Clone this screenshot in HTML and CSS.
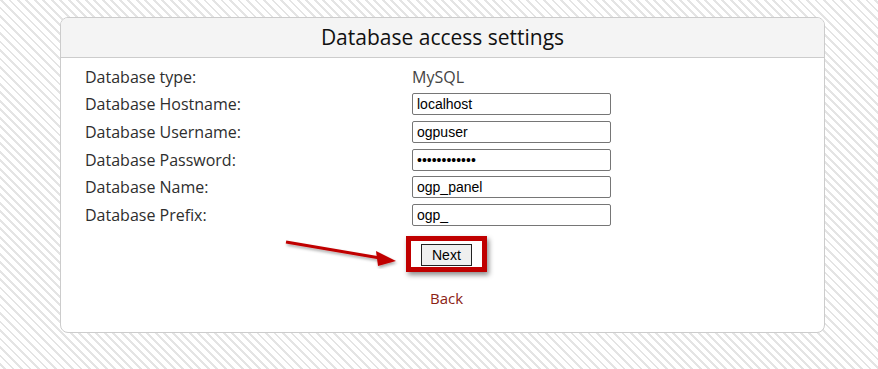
FILE: index.html
```html
<!DOCTYPE html>
<html lang="en">
<head>
  <meta charset="UTF-8">
  <title>Database access settings</title>
  <link rel="stylesheet" href="styles.css">
</head>
<body>

  <div class="panel">
    <div class="panel-head">Database access settings</div>

    <form class="panel-body">
      <div class="row">
        <label>Database type:</label>
        <span class="value">MySQL</span>
      </div>
      <div class="row">
        <label>Database Hostname:</label>
        <input type="text" value="localhost">
      </div>
      <div class="row">
        <label>Database Username:</label>
        <input type="text" value="ogpuser">
      </div>
      <div class="row">
        <label>Database Password:</label>
        <input type="password" value="ogppassword1">
      </div>
      <div class="row">
        <label>Database Name:</label>
        <input type="text" value="ogp_panel">
      </div>
      <div class="row">
        <label>Database Prefix:</label>
        <input type="text" value="ogp_">
      </div>

      <div class="actions">
        <div class="highlight">
          <button type="button">Next</button>
        </div>
        <!-- annotation arrow -->
        <svg class="arrow" width="120" height="30" viewBox="0 0 120 30">
          <defs>
            <filter id="sh" x="-20%" y="-50%" width="140%" height="200%">
              <feDropShadow dx="1" dy="2" stdDeviation="1.5" flood-color="#000" flood-opacity="0.35"/>
            </filter>
          </defs>
          <g filter="url(#sh)">
            <line x1="2" y1="3" x2="96" y2="19" stroke="#c00000" stroke-width="3"/>
            <polygon points="112,22 92,12 94,27" fill="#c00000"/>
          </g>
        </svg>
      </div>

      <a class="back" href="#">Back</a>
    </form>
  </div>

</body>
</html>
```

FILE: styles.css
```css
body {
  margin: 0;
  padding: 17px 0 38px;
  font-family: "Open Sans", sans-serif;
  color: #333;
  background-color: #fff;
  background-image: repeating-linear-gradient(45deg, #fff 0, #fff 4px, #e4e4e4 4px, #e4e4e4 6px);
}

.panel {
  width: 763px;
  margin: 0 auto 0 60px;
  background: #fff;
  border: 1px solid #cccccc;
  border-radius: 8px;
  overflow: hidden;
}

.panel-head {
  background: #f4f4f4;
  border-bottom: 1px solid #cccccc;
  height: 39px;
  line-height: 38px;
  text-align: center;
  font-size: 21px;
  color: #111;
}

.panel-body {
  padding: 5px 0 24px 24px;
}

.row {
  display: flex;
  align-items: center;
  height: 27.6px;
}

.row label {
  width: 327px;
  font-size: 16px;
  color: #2e2e2e;
}

.value {
  font-size: 16px;
  color: #444;
}

input {
  width: 199px;
  height: 22px;
  box-sizing: border-box;
  padding: 0 4px;
  border: 1px solid #767676;
  border-radius: 2px;
  font-family: "Liberation Sans", Arial, sans-serif;
  font-size: 14px;
  color: #000;
}

.actions {
  position: relative;
  margin: 7px 0 0 321px;
  height: 36px;
}

.highlight {
  display: inline-block;
  padding: 2px 10px 1px 10px;
  border: 5px solid #c00000;
  box-shadow: 2px 3px 5px rgba(0, 0, 0, 0.45);
  background: #fff;
}

button {
  font-family: "Liberation Sans", Arial, sans-serif;
  font-size: 14px;
  padding: 2px 10px;
  background: #efefef;
  border: 1px solid #222;
  color: #000;
}

.arrow {
  position: absolute;
  left: -122px;
  top: 3px;
}

.back {
  display: block;
  margin: 16px 0 0 345px;
  font-size: 15px;
  color: #8b2213;
  text-decoration: none;
}
```
